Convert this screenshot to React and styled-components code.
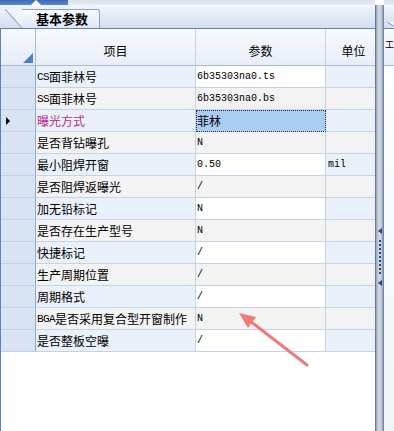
import React from "react";
import styled, { createGlobalStyle } from "styled-components";

const GlobalStyle = createGlobalStyle`
  html, body {
    margin: 0;
    padding: 0;
    background: #ffffff;
    overflow: hidden;
  }
  body {
    font-family: "Noto Sans CJK SC", "Noto Sans", sans-serif;
  }
`;

const rows = [
  { prefix: "CS", label: "面菲林号", value: "6b35303na0.ts", mono: true },
  { prefix: "SS", label: "面菲林号", value: "6b35303na0.bs", mono: true },
  { label: "曝光方式", value: "菲林", current: true },
  { label: "是否背钻曝孔", value: "N", mono: true },
  { label: "最小阻焊开窗", value: "0.50", unit: "mil", mono: true },
  { label: "是否阻焊返曝光", value: "/", mono: true },
  { label: "加无铅标记", value: "N", mono: true },
  { label: "是否存在生产型号", value: "N", mono: true },
  { label: "快捷标记", value: "/", mono: true },
  { label: "生产周期位置", value: "/", mono: true },
  { label: "周期格式", value: "/", mono: true },
  { prefix: "BGA", label: "是否采用复合型开窗制作", value: "N", mono: true },
  { label: "是否整板空曝", value: "/", mono: true },
];

function App() {
  return (
    <>
      <GlobalStyle />
      <Window>
        <LeftPanel>
          <TopStrip>
            <TopTab />
          </TopStrip>
          <TabStrip>
            <Tab>基本参数</Tab>
          </TabStrip>
          <Grid>
            <Table>
              <Corner />
              <HeadCell>项目</HeadCell>
              <HeadCell>参数</HeadCell>
              <HeadCell>单位</HeadCell>
              {rows.map((r, i) => {
                const alt = i % 2 === 1;
                return (
                  <React.Fragment key={i}>
                    <RowHead>{r.current && <CurrentMark />}</RowHead>
                    <ItemCell $alt={alt} $current={r.current}>
                      {r.prefix && <Latin>{r.prefix}</Latin>}
                      {r.label}
                    </ItemCell>
                    <ValueCell $alt={alt} $selected={r.current} $mono={r.mono}>
                      {r.value}
                    </ValueCell>
                    <UnitCell $alt={alt}>{r.unit}</UnitCell>
                  </React.Fragment>
                );
              })}
            </Table>
          </Grid>
        </LeftPanel>
        <Splitter>
          <SplitArrow />
          <Dots />
          <SplitArrow />
        </Splitter>
        <RightPanel>
          <TopStrip />
          <TabStrip>
            <SideTab />
          </TabStrip>
          <SideBody>
            <SideHead>工</SideHead>
          </SideBody>
        </RightPanel>
        <Annotation width="394" height="431" viewBox="0 0 394 431">
          <line x1="307" y1="365" x2="250" y2="321" stroke="#ee7b7b" strokeWidth="3" strokeLinecap="round" />
          <polygon points="239,313 256,317 248,328" fill="#ee7b7b" />
        </Annotation>
      </Window>
    </>
  );
}

export default App;

const Window = styled.div`
  position: relative;
  display: flex;
  width: 394px;
  height: 431px;
  overflow: hidden;
  background: #ffffff;
`;

const LeftPanel = styled.div`
  display: flex;
  flex-direction: column;
  width: 375px;
  flex: none;
`;

const TopStrip = styled.div`
  height: 5px;
  flex: none;
  background: linear-gradient(#d9e1ec, #e6ebf2);
  position: relative;
`;

const TopTab = styled.div`
  position: relative;
  width: 68px;
  height: 5px;
  background: linear-gradient(#3e69b8, #5a86d0);
  &::after {
    content: "";
    position: absolute;
    left: 31px;
    bottom: 0;
    border-left: 5px solid transparent;
    border-right: 5px solid transparent;
    border-bottom: 5px solid #ffffff;
  }
`;

const TabStrip = styled.div`
  flex: none;
  display: flex;
  align-items: flex-end;
  background: linear-gradient(#f2f5fb, #d3deee);
  border-bottom: 1px solid #5f80bd;
  box-sizing: border-box;
  height: 24px;
`;

const Tab = styled.div`
  position: relative;
  margin-left: 22px;
  width: 78px;
  height: 19px;
  box-sizing: border-box;
  border: 1px solid #86a2d2;
  border-left: none;
  border-bottom: none;
  border-top-right-radius: 3px;
  background: linear-gradient(#fbfcfe, #dce6f4);
  font-size: 13px;
  font-weight: bold;
  color: #000000;
  line-height: 18px;
  padding-left: 14px;
  &::before {
    content: "";
    position: absolute;
    left: -17px;
    top: -1px;
    width: 17px;
    height: 19px;
    background: linear-gradient(
      to top right,
      transparent calc(50% - 1px),
      #86a2d2 50%,
      #f0f4fb calc(50% + 1px)
    );
  }
`;

const Grid = styled.div`
  flex: 1;
  border-left: 1px solid #5f80bd;
  overflow: hidden;
  background: #ffffff;
`;

const Table = styled.div`
  display: grid;
  grid-template-columns: 35px 160px 130px 56px;
  grid-template-rows: 37px;
  grid-auto-rows: 22px;
  width: 381px;
`;

const Cell = styled.div`
  box-sizing: border-box;
  border-right: 1px solid #c5d3ea;
  border-bottom: 1px solid #c5d3ea;
  display: flex;
  align-items: center;
  overflow: hidden;
  white-space: nowrap;
  font-size: 12px;
  color: #000000;
`;

const Corner = styled(Cell)`
  position: relative;
  background: linear-gradient(#f7f9fd, #e6edf7);
  border-right-color: #a9bcdc;
  border-bottom-color: #a9bcdc;
  &::after {
    content: "";
    position: absolute;
    right: 2px;
    bottom: 2px;
    border-left: 10px solid transparent;
    border-bottom: 10px solid #4a7fd4;
  }
`;

const HeadCell = styled(Cell)`
  justify-content: center;
  padding-top: 6px;
  background: linear-gradient(#f8fafd, #e8eef8);
  border-bottom-color: #a9bcdc;
`;

const RowHead = styled(Cell)`
  background: #d8e3f3;
  border-right-color: #8fa9d6;
  border-bottom-color: #c0cfe8;
  padding-left: 5px;
`;

const CurrentMark = styled.span`
  border-top: 4px solid transparent;
  border-bottom: 4px solid transparent;
  border-left: 4px solid #000000;
`;

const ItemCell = styled(Cell)`
  background: ${(p) => (p.$alt ? "#f3f3f3" : "#ebf1fa")};
  color: ${(p) => (p.$current ? "#c2278c" : "#000000")};
  padding-left: 1px;
`;

const Latin = styled.span`
  font-family: "Liberation Mono", monospace;
  font-size: 11px;
  letter-spacing: -0.6px;
`;

const ValueCell = styled(Cell)`
  background: ${(p) =>
    p.$selected ? "#aacdf4" : p.$alt ? "#f3f3f3" : "#ffffff"};
  font-family: ${(p) =>
    p.$mono
      ? `"Liberation Mono", monospace`
      : `"Noto Sans CJK SC", sans-serif`};
  font-size: ${(p) => (p.$mono ? "10px" : "12px")};
  padding-left: 1px;
  outline: ${(p) => (p.$selected ? "1px dotted #1a2a50" : "none")};
  outline-offset: -1px;
`;

const UnitCell = styled(Cell)`
  background: ${(p) => (p.$alt ? "#f3f3f3" : "#ebf1fa")};
  font-family: "Liberation Mono", monospace;
  font-size: 10px;
  padding-left: 2px;
`;

const Splitter = styled.div`
  width: 9px;
  flex: none;
  margin-top: 5px;
  box-sizing: border-box;
  border-left: 1px solid #5e79ad;
  border-right: 1px solid #6f86b0;
  background: linear-gradient(to right, #9aa4b4, #d8dde5 45%, #bcc3ce 80%, #8d97a8);
  display: flex;
  flex-direction: column;
  align-items: center;
  gap: 6px;
  padding-top: 223px;
`;

const SplitArrow = styled.span`
  border-top: 3px solid transparent;
  border-bottom: 3px solid transparent;
  border-right: 4px solid #2d4373;
`;

const Dots = styled.span`
  width: 2px;
  height: 34px;
  background: repeating-linear-gradient(#2d4373 0 2px, transparent 2px 4px);
`;

const RightPanel = styled.div`
  flex: 1;
  display: flex;
  flex-direction: column;
  background: #ffffff;
`;

const SideTab = styled.div`
  width: 10px;
  height: 6px;
  background: linear-gradient(
    to top right,
    transparent calc(50% - 1px),
    #86a2d2 50%,
    #f0f4fb calc(50% + 1px)
  );
  margin-left: 3px;
`;

const SideBody = styled.div`
  flex: 1;
  background: linear-gradient(#ffffff, #f2f4f7);
`;

const SideHead = styled.div`
  height: 37px;
  box-sizing: border-box;
  padding-top: 9px;
  padding-left: 1px;
  font-size: 9px;
  background: linear-gradient(#f8fafd, #e8eef8);
  border-bottom: 1px solid #a9bcdc;
  overflow: hidden;
`;

const Annotation = styled.svg`
  position: absolute;
  left: 0;
  top: 0;
  pointer-events: none;
`;
